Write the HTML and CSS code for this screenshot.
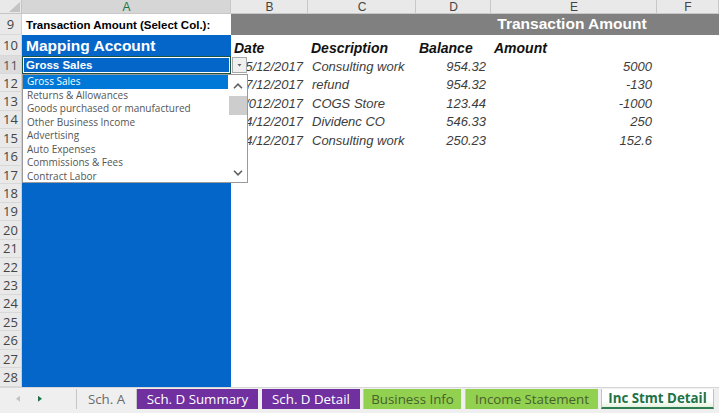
FILE: index.html
```html
<!DOCTYPE html>
<html>
<head>
<meta charset="utf-8">
<link rel="stylesheet" href="styles.css">
</head>
<body>
<div class="app">
  <div class="sheet">
    <div class="row hdr">
      <div class="corner"><span class="tri"></span></div>
      <div class="ch on">A</div>
      <div class="ch">B</div>
      <div class="ch">C</div>
      <div class="ch">D</div>
      <div class="ch">E</div>
      <div class="ch">F</div>
    </div>
    <div class="row r9">
      <div class="rh">9</div>
      <div class="c title9">Transaction Amount (Select Col.):</div>
      <div class="c band"></div>
      <div class="c band"></div>
      <div class="c band"></div>
      <div class="c band band-title">Transaction Amount</div>
      <div class="c band"></div>
    </div>
    <div class="row r10">
      <div class="rh">10</div>
      <div class="c blue mapping">Mapping Account</div>
      <div class="c colh">Date</div>
      <div class="c colh">Description</div>
      <div class="c colh">Balance</div>
      <div class="c colh">Amount</div>
      <div class="c"></div>
    </div>
    <div class="row r11">
      <div class="rh sel">11</div>
      <div class="c blue active">Gross Sales</div>
      <div class="c d num date">15/12/2017</div>
      <div class="c d">Consulting work</div>
      <div class="c d num">954.32</div>
      <div class="c d num">5000</div>
      <div class="c"></div>
    </div>
    <div class="row">
      <div class="rh">12</div>
      <div class="c blue"></div>
      <div class="c d num date">17/12/2017</div>
      <div class="c d">refund</div>
      <div class="c d num">954.32</div>
      <div class="c d num">-130</div>
      <div class="c"></div>
    </div>
    <div class="row">
      <div class="rh">13</div>
      <div class="c blue"></div>
      <div class="c d num date">10/012/2017</div>
      <div class="c d">COGS Store</div>
      <div class="c d num">123.44</div>
      <div class="c d num">-1000</div>
      <div class="c"></div>
    </div>
    <div class="row">
      <div class="rh">14</div>
      <div class="c blue"></div>
      <div class="c d num date">14/12/2017</div>
      <div class="c d">Dividenc CO</div>
      <div class="c d num">546.33</div>
      <div class="c d num">250</div>
      <div class="c"></div>
    </div>
    <div class="row">
      <div class="rh">15</div>
      <div class="c blue"></div>
      <div class="c d num date">24/12/2017</div>
      <div class="c d">Consulting work</div>
      <div class="c d num">250.23</div>
      <div class="c d num">152.6</div>
      <div class="c"></div>
    </div>
    <div class="row"><div class="rh">16</div><div class="c blue"></div></div>
    <div class="row"><div class="rh">17</div><div class="c blue"></div></div>
    <div class="row"><div class="rh">18</div><div class="c blue"></div></div>
    <div class="row"><div class="rh">19</div><div class="c blue"></div></div>
    <div class="row"><div class="rh">20</div><div class="c blue"></div></div>
    <div class="row"><div class="rh">21</div><div class="c blue"></div></div>
    <div class="row"><div class="rh">22</div><div class="c blue"></div></div>
    <div class="row"><div class="rh">23</div><div class="c blue"></div></div>
    <div class="row"><div class="rh">24</div><div class="c blue"></div></div>
    <div class="row"><div class="rh">25</div><div class="c blue"></div></div>
    <div class="row"><div class="rh">26</div><div class="c blue"></div></div>
    <div class="row"><div class="rh">27</div><div class="c blue"></div></div>
    <div class="row"><div class="rh">28</div><div class="c blue"></div></div>

    <div class="dd-btn"><span class="dd-tri"></span></div>
    <div class="dd-list">
      <div class="dd-items">
        <div class="dd-item on">Gross Sales</div>
        <div class="dd-item">Returns &amp; Allowances</div>
        <div class="dd-item">Goods purchased or manufactured</div>
        <div class="dd-item">Other Business Income</div>
        <div class="dd-item">Advertising</div>
        <div class="dd-item">Auto Expenses</div>
        <div class="dd-item">Commissions &amp; Fees</div>
        <div class="dd-item">Contract Labor</div>
      </div>
      <div class="dd-scroll">
        <div class="sb-btn up"><svg width="10" height="6" viewBox="0 0 10 6"><polyline points="1,5.2 5,1.2 9,5.2" fill="none" stroke="#606060" stroke-width="1.6"/></svg></div>
        <div class="sb-thumb"></div>
        <div class="sb-track"></div>
        <div class="sb-btn down"><svg width="10" height="6" viewBox="0 0 10 6"><polyline points="1,0.8 5,4.8 9,0.8" fill="none" stroke="#606060" stroke-width="1.6"/></svg></div>
      </div>
    </div>
  </div>

  <div class="tabs">
    <div class="nav">
      <span class="nav-l"></span>
      <span class="nav-r"></span>
    </div>
    <div class="tab plain">Sch. A</div>
    <div class="tab purple t-sum">Sch. D Summary</div>
    <div class="tab purple t-det">Sch. D Detail</div>
    <div class="tab green t-biz">Business Info</div>
    <div class="tab green t-inc">Income Statement</div>
    <div class="tab current">Inc Stmt Detail</div>
  </div>
</div>
</body>
</html>
```
FILE: styles.css
```css
* { box-sizing: border-box; margin: 0; padding: 0; }
html, body { width: 719px; height: 413px; overflow: hidden; background: #fff; }
body { font-family: "Liberation Sans", Arial, sans-serif; }

.app { display: flex; flex-direction: column; height: 413px; }
.sheet { position: relative; flex: none; }

.row {
  display: grid;
  grid-template-columns: 22px 209px 77px 108px 75px 166px 1fr;
  height: 18.4px;
}
.row.hdr { height: 14px; }
.row.r9, .row.r10 { height: 21px; }
.row.r11 { height: 18px; }

.corner {
  background: #e9e9e9;
  box-shadow: inset -1px -1px 0 #c4c4c4;
  display: flex;
  justify-content: flex-end;
  align-items: flex-end;
  padding: 0 2px 2px 0;
}
.tri {
  width: 11px;
  height: 10px;
  background: #c4c4c4;
  clip-path: polygon(100% 0, 100% 100%, 0 100%);
}
.ch {
  background: #e9e9e9;
  box-shadow: inset -1px -1px 0 #c8c8c8;
  font-family: "Liberation Sans", Arial, sans-serif;
  font-size: 12px;
  line-height: 14px;
  color: #444;
  text-align: center;
}
.ch.on { background: #d6d6d6; color: #217346; }

.rh {
  background: #e9e9e9;
  border-right: 1px solid #cfcfcf;
  border-bottom: 1px solid #d8d8d8;
  font-family: "Open Sans", sans-serif;
  font-size: 13px;
  color: #444;
  display: flex;
  align-items: center;
  justify-content: center;
  overflow: hidden;
}
.rh.sel { background: #dcdcdc; color: #555; }

.c {
  display: flex;
  align-items: flex-end;
  overflow: hidden;
  white-space: nowrap;
  padding: 0 3px 1px 4px;
}
.blue { background: #0566c9; color: #fff; }
.band { background: #808080; color: #fff; }

.title9 { font-weight: bold; font-size: 11.5px; color: #000; align-items: center; padding-bottom: 0; }
.mapping { font-weight: bold; font-size: 15.5px; align-items: center; padding-bottom: 0; }
.band-title { font-weight: bold; font-size: 15.5px; justify-content: center; align-items: center; padding: 0 4px 1px 0; }
.colh { font-weight: bold; font-style: italic; font-size: 14px; color: #111; padding-left: 3px; padding-bottom: 0; }

.d { font-style: italic; font-size: 13px; color: #3d3d3d; padding-bottom: 0; }
.num { justify-content: flex-end; padding-right: 5px; padding-left: 0; }

.active {
  border: 1px solid #1c5440;
  box-shadow: inset 0 0 0 1px #ffffff;
  font-weight: bold;
  font-size: 11.5px;
  align-items: center;
  padding: 0 3px;
}

/* data-validation dropdown (overlay) */
.dd-btn {
  position: absolute;
  left: 232px;
  top: 57px;
  width: 15px;
  height: 16px;
  background: #f0f0f0;
  border: 1px solid #a8a8a8;
  display: flex;
  align-items: center;
  justify-content: center;
}
.dd-tri {
  width: 5px;
  height: 3px;
  background: #666;
  clip-path: polygon(0 0, 100% 0, 50% 100%);
}
.dd-list {
  position: absolute;
  left: 22px;
  top: 74px;
  width: 226px;
  height: 109px;
  background: #fff;
  border: 1px solid #9a9a9a;
  display: flex;
}
.dd-items {
  flex: 1;
  font-family: "Open Sans", sans-serif;
  font-size: 10px;
  color: #555;
}
.dd-item { height: 13.5px; line-height: 13.5px; padding-left: 4px; white-space: nowrap; }
.dd-item.on { background: #0078d7; color: #fff; }
.dd-scroll { width: 19px; display: flex; flex-direction: column; background: #fff; }
.sb-btn { height: 21px; display: flex; align-items: center; justify-content: center; }
.sb-btn.down { height: 19px; }
.sb-thumb { height: 19px; background: #cdcdcd; margin: 0 0 0 1px; }
.sb-track { flex: 1; }

/* sheet tabs */
.tabs {
  flex: 1;
  background: #efefef;
  border-top: 1px solid #d6d6d6;
  display: flex;
  align-items: flex-start;
  padding-top: 1px;
  font-family: "Open Sans", sans-serif;
  font-size: 13.3px;
  overflow: hidden;
}
.nav {
  flex: none;
  width: 77px;
  height: 20px;
  display: flex;
  align-items: center;
  padding-left: 16px;
  gap: 18px;
  border-right: 1px solid #c6c6c6;
}
.nav-l {
  width: 4px; height: 6px; background: #c2c2c2;
  clip-path: polygon(100% 0, 100% 100%, 0 50%);
}
.nav-r {
  width: 4px; height: 6px; background: #217346;
  clip-path: polygon(0 0, 100% 50%, 0 100%);
}
.tab {
  flex: none;
  height: 20px;
  display: flex;
  align-items: center;
  justify-content: center;
  white-space: nowrap;
}
.tab.plain { width: 60px; color: #6a6a6a; border-right: 1px solid #c6c6c6; }
.tab.purple { background: #7030a0; color: #fff; }
.tab.green { background: #92d050; color: #46612d; border-left: 1px solid #c8c8c8; }
.t-sum { width: 121px; }
.t-det { width: 98px; margin-left: 4px; }
.t-biz { width: 98px; margin-left: 3px; }
.t-inc { width: 133px; margin-left: 4px; }
.tab.current {
  width: 113px;
  margin-left: 3px;
  background: linear-gradient(#ffffff 65%, #e4f2dc);
  border-left: 1px solid #c2c2c2;
  border-right: 1px solid #c2c2c2;
  border-bottom: 2px solid #2f7d52;
  color: #217346;
  font-weight: bold;
}
```
